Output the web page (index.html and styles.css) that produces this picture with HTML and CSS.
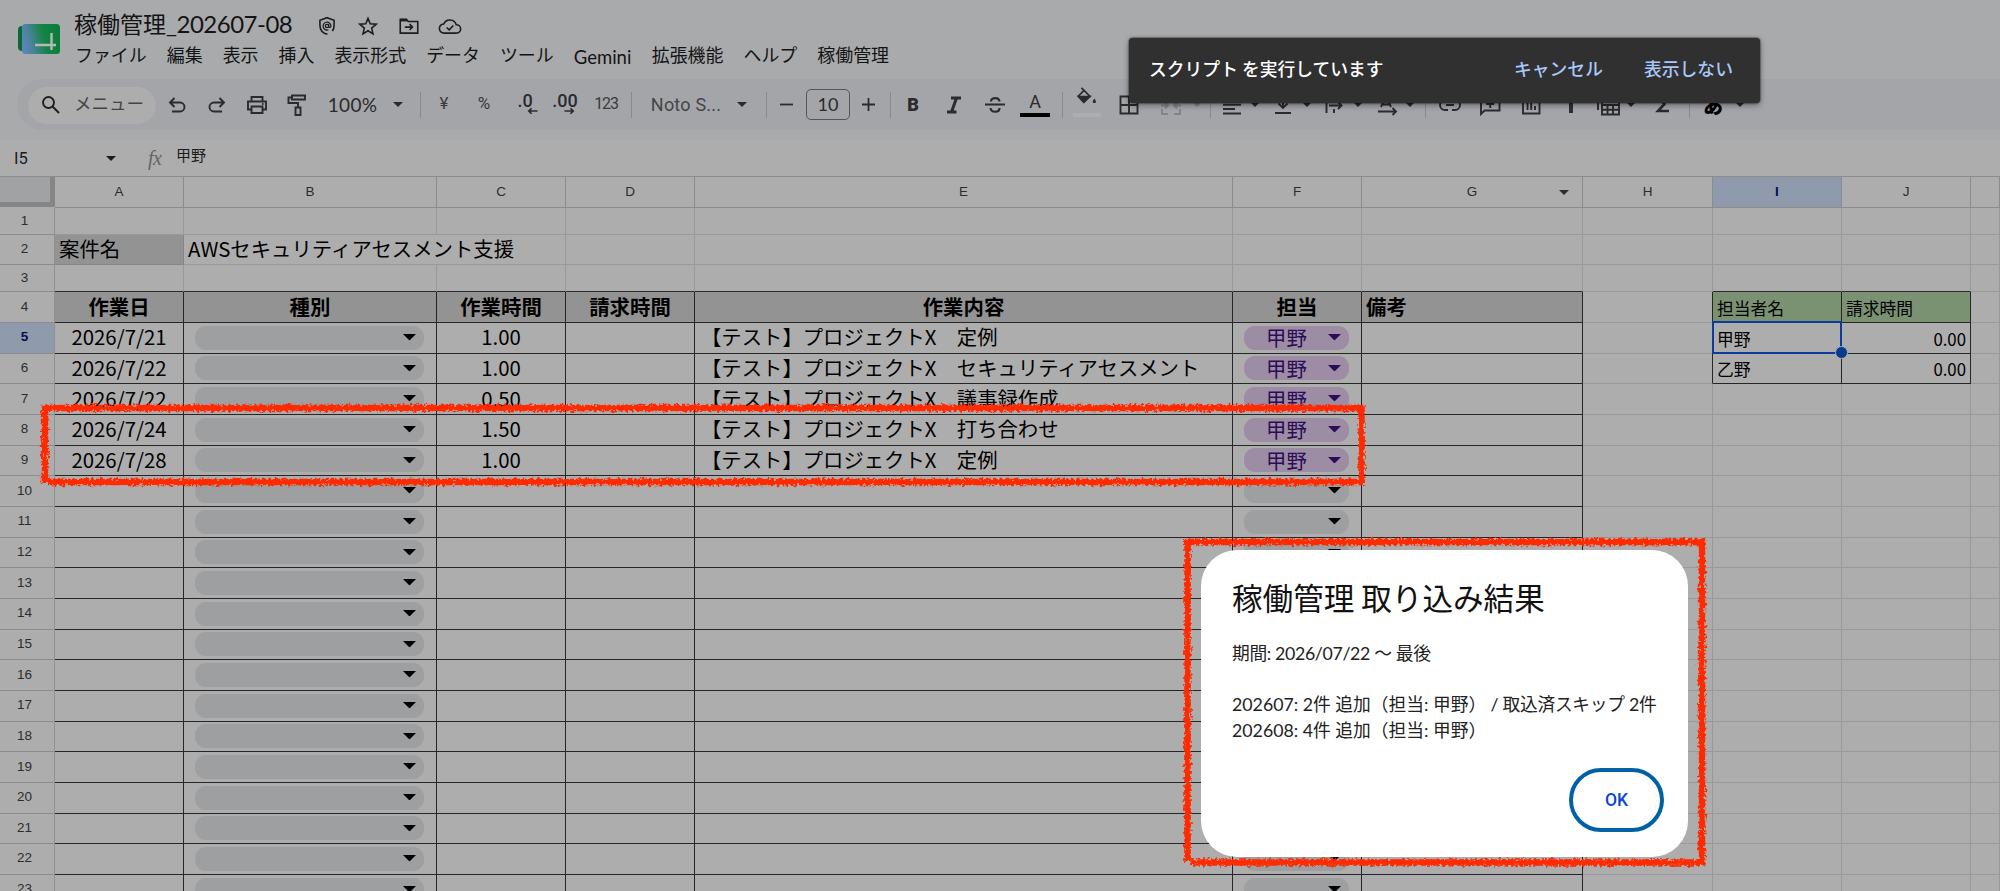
FILE: index.html
```html
<!DOCTYPE html>
<html lang="ja">
<head>
<meta charset="utf-8">
<title>稼働管理_202607-08</title>
<link rel="stylesheet" href="styles.css">
</head>
<body>
<svg width="0" height="0" class="defs">
  <defs>
    <symbol id="caret" viewBox="0 0 12 6"><path d="M0 0h12L6 6z" fill="currentColor"/></symbol>
  </defs>
</svg>
<header class="top">
  <div class="brand">
    <svg class="logo" viewBox="0 0 42 32">
      <defs><linearGradient id="lg" x1="0" x2="1" y1="0.6" y2="0.4"><stop offset="0" stop-color="#5c83bd"/><stop offset=".2" stop-color="#4c84a0"/><stop offset=".6" stop-color="#138343"/><stop offset="1" stop-color="#0a7d3a"/></linearGradient></defs>
      <rect x="0" y="3" width="14" height="25" rx="4" fill="#0a6a36"/>
      <rect x="4" y="1" width="38" height="30" rx="3.5" fill="url(#lg)"/>
      <path d="M17 22h21M33.500 10v17" stroke="#b4b9b4" stroke-width="2.400" fill="none"/>
    </svg>
    <div class="titles">
      <div class="title-row">
        <span class="doc-title">稼働管理<span class="doc-num">_202607-08</span></span>
        <svg class="ti" viewBox="0 0 24 24"><path d="M12.500 22C7 20.500 3.500 16.500 3.500 11V5.200L12 2l8.500 3.200V11c0 3-.8 5.300-2 7.200"/><g stroke-width="1.500"><circle cx="12" cy="12" r="2"/><path d="M14 10v2.600c0 1.800 2.900 1.600 2.700-1a4.700 4.700 0 1 0-3 4.900"/></g></svg>
        <svg class="ti" viewBox="0 0 24 24"><path d="M12 2.800l2.700 6.500 7 .6-5.300 4.600 1.600 6.900-6-3.700-6 3.700 1.600-6.900L2.300 9.900l7-.6z"/></svg>
        <svg class="ti" viewBox="0 0 24 24"><path d="M1.500 4h7.500l2 2.500h11.500V20.500h-21z"/><path d="M1.500 5h8" stroke-width="3"/><path d="M7 13.300h9M12.700 9.800l3.500 3.500-3.500 3.500"/></svg>
        <svg class="ti cloud" viewBox="0 0 28 24"><path d="M7 20.500a5.500 5.500 0 0 1-.5-11 8 8 0 0 1 15 1 5 5 0 0 1 .5 10z"/><path d="M10 13.800l3 2.800 5-5.200"/></svg>
      </div>
      <nav class="menu"><span>ファイル</span><span>編集</span><span>表示</span><span>挿入</span><span>表示形式</span><span>データ</span><span>ツール</span><span class="gem">Gemini</span><span>拡張機能</span><span>ヘルプ</span><span>稼働管理</span></nav>
    </div>
  </div>
  <div class="toolbar">
    <div class="search"><svg viewBox="0 0 20 20"><circle cx="7.500" cy="7.500" r="5.500"/><path d="M11.500 11.500l6.500 6.500"/></svg><span>メニュー</span></div>
    <i class="t w40"><svg viewBox="0 0 24 24"><path d="M9.500 5L5 9.500l4.500 4.500M5 9.500h10a4.500 4.500 0 0 1 0 9H7"/></svg></i>
    <i class="t w40"><svg viewBox="0 0 24 24"><path d="M14.500 5L19 9.500 14.500 14M19 9.500H9a4.500 4.500 0 0 0 0 9h8"/></svg></i>
    <i class="t w40"><svg viewBox="0 0 24 24"><path d="M6.500 8V4h11v4M6.500 16.500H3V8.500h18v8h-3.500"/><path d="M6.500 13.500h11V20h-11z"/><path d="M17 11h1.500"/></svg></i>
    <i class="t w40"><svg viewBox="0 0 24 24"><path d="M7 2.500h13v4H7zM7 4.500H3.500V10h9.500v4M10.500 14.500h5V22h-5z"/></svg></i>
    <i class="t w71 zoomtxt">100%</i>
    <i class="t w20"><svg class="caret"><use href="#caret"/></svg></i>
    <i class="t w24"><b class="sep"></b></i>
    <i class="t w24 sm">¥</i>
    <i class="t w56 sm">%</i>
    <i class="t w26 dec">.0<svg class="arr" viewBox="0 0 12 8"><path d="M11.500 4H2M5 1L2 4l3 3"/></svg></i>
    <i class="t w54 dec">.00<svg class="arr" viewBox="0 0 12 8"><path d="M.5 4H10M7 1l3 3-3 3"/></svg></i>
    <i class="t w28 sm narrow">123</i>
    <i class="t w22"><b class="sep"></b></i>
    <i class="t w88 font">Noto S...</i>
    <i class="t w24"><svg class="caret"><use href="#caret"/></svg></i>
    <i class="t w24"><b class="sep"></b></i>
    <i class="t w16"><svg class="pm" viewBox="0 0 14 14"><path d="M0 7h14"/></svg></i>
    <i class="t size">10</i>
    <i class="t w36"><svg class="pm" viewBox="0 0 14 14"><path d="M0 7h14M7 0v14"/></svg></i>
    <i class="t w8"><b class="sep"></b></i>
    <i class="t w38 bold">B</i>
    <i class="t w44"><svg viewBox="0 0 24 24"><path d="M9 5h10M5 19h9.500M14.500 5L9.500 19" stroke-width="3"/></svg></i>
    <i class="t w38"><svg viewBox="0 0 24 24"><path d="M2 11.500h20M8 8.500c0-4.500 8-4.500 8.500 0M7.500 15c.5 5 9 5 9 0" stroke-width="2.200"/></svg></i>
    <i class="t w42 acol">A</i>
    <i class="t w12"><b class="sep"></b></i>
    <i class="t w38 fillc"><svg viewBox="0 0 24 24"><path d="M6 1l9 9-6.500 6.500L2.500 10 9 3.500"/><path d="M3 10.500h12l-6.500 6z" fill="currentColor"/><path d="M20 12.500c-3 4-1.500 5 0 5s3-1 0-5z" fill="currentColor" stroke="none"/></svg></i>
    <i class="t w46"><svg viewBox="0 0 24 24"><path d="M3.500 3.500h17v17h-17zM12 3.500v17M3.500 12h17"/></svg></i>
    <i class="t w38 dim"><svg viewBox="0 0 24 24"><path d="M3 8V4h6M21 8V4h-6M3 16v5h6M21 16v5h-6M2 12.500h7M6 9.500l3 3-3 3M22 12.500h-7M18 9.500l-3 3 3 3"/></svg></i>
    <i class="t w14 dim"><svg class="caret"><use href="#caret"/></svg></i>
    <i class="t w13"><b class="sep"></b></i>
    <i class="t w30"><svg viewBox="0 0 24 24"><path d="M3 4h18M3 8h12M3 11.800h18M3 16h12M3 20.500h18"/></svg></i>
    <i class="t w16"><svg class="caret"><use href="#caret"/></svg></i>
    <i class="t w30 ml5"><svg viewBox="0 0 24 24"><path d="M12 3v12M7.500 10.500L12 15l4.500-4.500M4 20h16"/></svg></i>
    <i class="t w17"><svg class="caret"><use href="#caret"/></svg></i>
    <i class="t w30 ml4"><svg viewBox="0 0 24 24"><path d="M4.500 3v17M12 3v6M12 16v4M7 12.500h12M16 9l3.500 3.500L16 16"/></svg></i>
    <i class="t w18"><svg class="caret"><use href="#caret"/></svg></i>
    <i class="t w30 ml5"><svg viewBox="0 0 24 24"><path d="M6 14l5-11 5 11M7.500 11.500h7M3 18.500h18M17.500 15l3.500 3.500-3.500 3.500"/></svg></i>
    <i class="t w16"><svg class="caret"><use href="#caret"/></svg></i>
    <i class="t w15"><b class="sep"></b></i>
    <i class="t w34"><svg viewBox="0 0 24 24"><path d="M10 7H7a5 5 0 0 0 0 10h3M14 7h3a5 5 0 0 1 0 10h-3M8 12h8"/></svg></i>
    <i class="t w46"><svg viewBox="0 0 24 24"><path d="M3 21V3.500h18.500v14H6.500zM12.200 7v8M8.200 11h8"/></svg></i>
    <i class="t w36"><svg viewBox="0 0 24 24"><path d="M4 4h16.500v16.500H4zM8.500 10v7M12.200 7v10M16 13v4"/></svg></i>
    <i class="t w44"><svg viewBox="0 0 24 24"><path d="M4 2h16l-7 7.500v9.500h-2V9.500z"/></svg></i>
    <i class="t w30"><svg viewBox="0 0 24 24"><path d="M2 17V3h18M6 7h17v14.500H6zM6 12h17M6 16.700h17M11.500 12v9M17 12v9"/></svg></i>
    <i class="t w16"><svg class="caret"><use href="#caret"/></svg></i>
    <i class="t w48"><svg viewBox="0 0 24 24"><path d="M18 4H7l6.500 7L7 18h11" stroke-width="2.600"/></svg></i>
    <i class="t w4"><b class="sep"></b></i>
    <i class="t w44 kana">あ</i>
    <i class="t w10"><svg class="caret"><use href="#caret"/></svg></i>
  </div>
</header>
<div class="fbar">
  <span class="namebox">I5</span>
  <svg class="caret"><use href="#caret"/></svg>
  <span class="fx">fx</span>
  <span class="formula">甲野</span>
</div>
<table class="sheet">
<tbody>
<tr class="cols"><th class="corner"></th><th>A</th><th>B</th><th>C</th><th>D</th><th>E</th><th>F</th><th class="g">G<svg class="caret"><use href="#caret"/></svg></th><th>H</th><th class="sel">I</th><th>J</th><th></th></tr>
<tr class="r1"><th>1</th><td></td><td></td><td></td><td></td><td></td><td></td><td></td><td></td><td></td><td></td><td></td></tr>
<tr class="r2"><th>2</th><td class="gray">案件名</td><td class="span2">AWSセキュリティアセスメント支援</td><td></td><td></td><td></td><td></td><td></td><td></td><td></td><td></td></tr>
<tr class="r3"><th>3</th><td></td><td></td><td></td><td></td><td></td><td></td><td></td><td></td><td></td><td></td><td></td></tr>
<tr class="r4 k m"><th>4</th><td>作業日</td><td>種別</td><td>作業時間</td><td>請求時間</td><td>作業内容</td><td>担当</td><td>備考</td><td></td><td>担当者名</td><td>請求時間</td><td></td></tr>
<tr class="k m"><th class="sel">5</th><td>2026/7/21</td><td><span class="chip"><svg><use href="#caret"/></svg></span></td><td>1.00</td><td></td><td>【テスト】プロジェクトX　定例</td><td><span class="chip p">甲野<svg><use href="#caret"/></svg></span></td><td></td><td></td><td class="active">甲野</td><td>0.00</td><td></td></tr>
<tr class="k m"><th>6</th><td>2026/7/22</td><td><span class="chip"><svg><use href="#caret"/></svg></span></td><td>1.00</td><td></td><td>【テスト】プロジェクトX　セキュリティアセスメント</td><td><span class="chip p">甲野<svg><use href="#caret"/></svg></span></td><td></td><td></td><td>乙野</td><td>0.00</td><td></td></tr>
<tr class="k"><th>7</th><td>2026/7/22</td><td><span class="chip"><svg><use href="#caret"/></svg></span></td><td>0.50</td><td></td><td>【テスト】プロジェクトX　議事録作成</td><td><span class="chip p">甲野<svg><use href="#caret"/></svg></span></td><td></td><td></td><td></td><td></td><td></td></tr>
<tr class="k"><th>8</th><td>2026/7/24</td><td><span class="chip"><svg><use href="#caret"/></svg></span></td><td>1.50</td><td></td><td>【テスト】プロジェクトX　打ち合わせ</td><td><span class="chip p">甲野<svg><use href="#caret"/></svg></span></td><td></td><td></td><td></td><td></td><td></td></tr>
<tr class="k"><th>9</th><td>2026/7/28</td><td><span class="chip"><svg><use href="#caret"/></svg></span></td><td>1.00</td><td></td><td>【テスト】プロジェクトX　定例</td><td><span class="chip p">甲野<svg><use href="#caret"/></svg></span></td><td></td><td></td><td></td><td></td><td></td></tr>
<tr class="k"><th>10</th><td></td><td><span class="chip"><svg><use href="#caret"/></svg></span></td><td></td><td></td><td></td><td><span class="chip"><svg><use href="#caret"/></svg></span></td><td></td><td></td><td></td><td></td><td></td></tr>
<tr class="k"><th>11</th><td></td><td><span class="chip"><svg><use href="#caret"/></svg></span></td><td></td><td></td><td></td><td><span class="chip"><svg><use href="#caret"/></svg></span></td><td></td><td></td><td></td><td></td><td></td></tr>
<tr class="k"><th>12</th><td></td><td><span class="chip"><svg><use href="#caret"/></svg></span></td><td></td><td></td><td></td><td><span class="chip"><svg><use href="#caret"/></svg></span></td><td></td><td></td><td></td><td></td><td></td></tr>
<tr class="k"><th>13</th><td></td><td><span class="chip"><svg><use href="#caret"/></svg></span></td><td></td><td></td><td></td><td><span class="chip"><svg><use href="#caret"/></svg></span></td><td></td><td></td><td></td><td></td><td></td></tr>
<tr class="k"><th>14</th><td></td><td><span class="chip"><svg><use href="#caret"/></svg></span></td><td></td><td></td><td></td><td><span class="chip"><svg><use href="#caret"/></svg></span></td><td></td><td></td><td></td><td></td><td></td></tr>
<tr class="k"><th>15</th><td></td><td><span class="chip"><svg><use href="#caret"/></svg></span></td><td></td><td></td><td></td><td><span class="chip"><svg><use href="#caret"/></svg></span></td><td></td><td></td><td></td><td></td><td></td></tr>
<tr class="k"><th>16</th><td></td><td><span class="chip"><svg><use href="#caret"/></svg></span></td><td></td><td></td><td></td><td><span class="chip"><svg><use href="#caret"/></svg></span></td><td></td><td></td><td></td><td></td><td></td></tr>
<tr class="k"><th>17</th><td></td><td><span class="chip"><svg><use href="#caret"/></svg></span></td><td></td><td></td><td></td><td><span class="chip"><svg><use href="#caret"/></svg></span></td><td></td><td></td><td></td><td></td><td></td></tr>
<tr class="k"><th>18</th><td></td><td><span class="chip"><svg><use href="#caret"/></svg></span></td><td></td><td></td><td></td><td><span class="chip"><svg><use href="#caret"/></svg></span></td><td></td><td></td><td></td><td></td><td></td></tr>
<tr class="k"><th>19</th><td></td><td><span class="chip"><svg><use href="#caret"/></svg></span></td><td></td><td></td><td></td><td><span class="chip"><svg><use href="#caret"/></svg></span></td><td></td><td></td><td></td><td></td><td></td></tr>
<tr class="k"><th>20</th><td></td><td><span class="chip"><svg><use href="#caret"/></svg></span></td><td></td><td></td><td></td><td><span class="chip"><svg><use href="#caret"/></svg></span></td><td></td><td></td><td></td><td></td><td></td></tr>
<tr class="k"><th>21</th><td></td><td><span class="chip"><svg><use href="#caret"/></svg></span></td><td></td><td></td><td></td><td><span class="chip"><svg><use href="#caret"/></svg></span></td><td></td><td></td><td></td><td></td><td></td></tr>
<tr class="k"><th>22</th><td></td><td><span class="chip"><svg><use href="#caret"/></svg></span></td><td></td><td></td><td></td><td><span class="chip"><svg><use href="#caret"/></svg></span></td><td></td><td></td><td></td><td></td><td></td></tr>
<tr class="k"><th>23</th><td></td><td><span class="chip"><svg><use href="#caret"/></svg></span></td><td></td><td></td><td></td><td><span class="chip"><svg><use href="#caret"/></svg></span></td><td></td><td></td><td></td><td></td><td></td></tr>
</tbody>
</table>

<div class="toast"><span class="msg">スクリプト を実行しています</span><span class="act">キャンセル</span><span class="act">表示しない</span></div>

<div class="dialog">
  <h1>稼働管理 取り込み結果</h1>
  <p class="l1">期間: 2026/07/22 ～ 最後</p>
  <p class="l3">202607: 2件 追加（担当: 甲野）<span class="tight"> / 取込済スキップ 2件</span></p>
  <p class="l4">202608: 4件 追加（担当: 甲野）</p>
  <button>OK</button>
</div>

<svg class="marks" viewBox="0 0 2000 891">
  <defs><filter id="rough" filterUnits="userSpaceOnUse" x="0" y="0" width="2000" height="891"><feTurbulence type="fractalNoise" baseFrequency="0.35" numOctaves="2" seed="4"/><feDisplacementMap in="SourceGraphic" scale="7" xChannelSelector="R" yChannelSelector="G"/></filter></defs>
  <g filter="url(#rough)" fill="none" stroke="#ff2a00" stroke-width="6.500">
    <path d="M42 408H1361.500V482H48M45 405V483"/>
    <path d="M1184 542H1702V862.500H1191M1187.500 540V862"/>
  </g>
</svg>
</body>
</html>
```
FILE: styles.css
```css
* { box-sizing: border-box; }
body { margin: 0; width: 2000px; height: 891px; overflow: hidden; position: relative; background: #adadad; color: #000; font-family: "Noto Sans CJK JP", sans-serif; }
.defs { position: absolute; }
svg { display: block; flex: none; fill: none; stroke: currentColor; stroke-width: 1.9; }
.caret, .chip svg { stroke: none; }
.caret { width: 10px; height: 5px; }

.top { height: 140px; background: #a9aaac; display: flex; flex-direction: column; }
.brand { height: 79px; display: flex; padding-left: 18px; }
.logo { width: 42px; height: 32px; margin-top: 23px; stroke: none; }
.titles { margin-left: 14px; }
.title-row { height: 41px; padding-top: 10px; display: flex; align-items: center; color: #1c1d1e; }
.doc-title { font-size: 23px; line-height: 32px; color: #131415; width: 243px; margin-top: -5px; white-space: nowrap; }
.doc-num { font-family: Lato, "Noto Sans CJK JP", sans-serif; font-size: 24px; letter-spacing: -.5px; }
.ti { width: 20px; height: 20px; margin-right: 21px; stroke-width: 1.9; }
.cloud { width: 24px; margin-left: -2px; }
.menu { display: flex; gap: 20px; padding-left: 1px; font-size: 17.950px; line-height: 26px; color: #131415; white-space: nowrap; }
.gem { font-family: Lato, sans-serif; width: 58px; padding-top: 3px; font-size: 18.5px; }

.toolbar { margin-left: 17px; height: 51px; background: #a3a5a9; border-radius: 26px 0 0 26px; display: flex; align-items: center; padding-left: 11px; color: #2a2b2c; }
.search { width: 128px; height: 37px; margin: 1px 1px 0 0; border-radius: 19px; background: #adadad; display: flex; align-items: center; padding-left: 13px; gap: 13px; font-size: 17.500px; color: #434545; }
.search svg { width: 20px; height: 20px; color: #1e1f20; }
.search span { margin-top: -6px; }
.t { flex: none; height: 40px; display: flex; align-items: center; justify-content: center; font-style: normal; position: relative; line-height: 40px; }
.t svg { width: 24px; height: 24px; }
.t .caret { width: 10px; height: 5px; }
.t .pm { width: 13px; height: 13px; }
.sep { width: 1px; height: 26px; background: #888a8d; }
.zoomtxt { font: 19px Lato, sans-serif; letter-spacing: .3px; }
.sm { font: 17px Roboto, sans-serif; color: #3a3b3c; padding-bottom: 3px; }
.narrow { font-size: 16px; letter-spacing: -1.2px; }
.dec { font: 500 18px Roboto, sans-serif; padding-bottom: 9px; }
.t .arr { position: absolute; bottom: 10px; width: 11px; height: 8px; }
.w26 .arr { right: 0; }
.w54 .arr { right: 17px; }
.font { font: 18px Roboto, sans-serif; color: #434547; letter-spacing: .2px; }
.size { width: 44px; height: 31px; margin-left: 12px; border: 1px solid #555658; border-radius: 5px; font: 18px Lato, sans-serif; padding-bottom: 2px; }
.bold { font: 900 18px Roboto, sans-serif; }
.acol::after, .fillc::after { content: ""; position: absolute; left: 6px; right: 6px; top: 28px; height: 4px; background: #000; }
.acol { font: 18px Roboto, sans-serif; padding-bottom: 7px; }
.fillc::after { left: 5px; right: 5px; background: #adadad; }
.fillc svg { width: 22px; height: 22px; margin-top: -14px; }
.dim { color: #828488; }
.kana { font-weight: 900; font-size: 20px; color: #000; padding-top: 2px; }
.ml4 { margin-left: 4px; } .ml5 { margin-left: 5px; }
.w4 { width: 4px; } .w8 { width: 8px; } .w10 { width: 10px; } .w12 { width: 12px; } .w13 { width: 13px; } .w14 { width: 14px; } .w15 { width: 15px; } .w16 { width: 16px; } .w17 { width: 17px; } .w18 { width: 18px; } .w20 { width: 20px; } .w22 { width: 22px; } .w24 { width: 24px; } .w26 { width: 26px; } .w28 { width: 28px; } .w30 { width: 30px; } .w34 { width: 34px; } .w36 { width: 36px; } .w38 { width: 38px; } .w40 { width: 40px; } .w42 { width: 42px; } .w44 { width: 44px; } .w46 { width: 46px; } .w48 { width: 48px; } .w54 { width: 54px; } .w56 { width: 56px; } .w71 { width: 71px; } .w88 { width: 88px; }

.fbar { height: 37px; border-bottom: 1px solid #8c8c8c; display: flex; align-items: center; padding-left: 14px; color: #1b1c1c; }
.namebox { width: 92px; font: 16.500px Roboto, sans-serif; }
.fx { margin-left: 32px; width: 28px; font: italic 20px "Liberation Serif", serif; color: #646464; letter-spacing: -.5px; }
.formula { font-size: 15px; margin-top: -7px; }

.sheet, .sheet tbody { display: block; }
.sheet tr { display: grid; grid-template-columns: 55px 129px 253px 129px 129px 538px 129px 221px 130px 129px 129px 29px; height: 30.667px; }
.sheet tr.cols { height: 31px; }
.sheet tr.r1, .sheet tr.r3 { height: 27px; }
.sheet tr.r2 { height: 30px; }
.sheet tr.r4 { height: 31px; }
th, td { padding: 0 0 2px; border: 0 solid #999; border-width: 0 1px 1px 0; display: flex; align-items: center; justify-content: center; font-size: 20.400px; white-space: nowrap; min-width: 0; line-height: 27px; }
th { font: 13.500px "Liberation Sans", sans-serif; color: #2b2d2d; border-color: #8c8c8c; }
tr > th:first-child { padding-right: 5px; border-right-color: #909090; }
.cols th.corner { padding: 0; border: solid #868686; border-width: 0 5px 5px 0; background: #a0a2a4; margin-bottom: 1px; }
th.sel { background: #8f9aac; color: #04104a; font-weight: bold; }
.g { position: relative; }
.g .caret { position: absolute; right: 13px; top: 13px; }
td.gray { background: #939393; justify-content: flex-start; padding-left: 4px; border-color: #868686; }
.span2 { grid-column: span 2; justify-content: flex-start; padding-left: 4px; }
.r3 td:nth-of-type(-n+7), .r3 td:nth-of-type(9), .r3 td:nth-of-type(10) { border-bottom-color: #2b2b2b; }
.k td:nth-of-type(-n+7) { border-color: #262626; }
.m td:nth-of-type(8) { border-right-color: #262626; }
.m td:nth-of-type(9), .m td:nth-of-type(10) { border-color: #262626; font-size: 16.800px; align-items: flex-end; justify-content: flex-start; padding: 0 0 1px 4px; line-height: 26px; }
.m td:nth-of-type(10) { justify-content: flex-end; padding-right: 4px; }
.r4 td:nth-of-type(-n+7) { background: #939393; font-weight: bold; }
.r4 td:nth-of-type(7) { justify-content: flex-start; padding-left: 4px; }
.r4 td:nth-of-type(9), .m.r4 td:nth-of-type(10) { background: #7b9272; justify-content: flex-start; }
.k:not(.r4) td:nth-of-type(5) { justify-content: flex-start; padding-left: 6px; font-size: 20.350px; }
.chip { flex: 1; height: 24px; margin: 2px 12px 0 11px; border-radius: 11px; background: #9d9fa1; display: flex; align-items: center; justify-content: flex-end; padding-right: 8px; line-height: 22px; padding-bottom: 1px; }
.chip svg { width: 13px; height: 6.500px; }
.chip.p { background: #9c8ca4; color: #2c0c56; justify-content: space-between; padding-left: 22px; }
.active { position: relative; }
.active::before { content: ""; position: absolute; inset: -2px -1px -1px -1px; border: 2px solid #0b3c9b; }
.active::after { content: ""; position: absolute; right: -7px; bottom: -6px; width: 11px; height: 11px; border-radius: 50%; background: #073b8d; border: 1px solid #adadad; z-index: 2; }

.toast { position: absolute; left: 1129px; top: 38px; width: 631px; height: 65px; background: #303030; border-radius: 4px; box-shadow: 0 2px 6px rgba(0,0,0,.4), 0 0 2px #000; display: flex; align-items: center; padding-left: 20px; font-size: 17.800px; font-weight: 500; color: #fff; white-space: nowrap; }
.toast span { margin-top: -5px; flex: none; }
.msg { width: 365px; }
.act { width: 130px; color: #a8c7fa; }
.act + .act { width: 100px; }
.dialog { position: absolute; left: 1201px; top: 550px; width: 487px; height: 307px; border-radius: 36px; background: #fff; padding: 25px 24px 25px 31px; display: flex; flex-direction: column; color: #222; }
.dialog h1 { margin: 0; font-size: 30.600px; line-height: 44px; font-weight: 400; color: #111; white-space: nowrap; }
.dialog p { margin: 0; font: 400 17.750px/26px Lato, "Noto Sans CJK JP", sans-serif; white-space: nowrap; }
.dialog .l1 { margin: 21px 0 25px; letter-spacing: -.35px; }
.tight { letter-spacing: -.3px; }
.dialog button { margin: auto 0 0 auto; width: 95px; height: 64px; border: 4px solid #0062a3; border-radius: 32px; background: #fff; color: #0b46d4; font: 500 17.500px Roboto, sans-serif; }
.marks { position: absolute; left: 0; top: 0; width: 2000px; height: 891px; z-index: 5; pointer-events: none; }
```
